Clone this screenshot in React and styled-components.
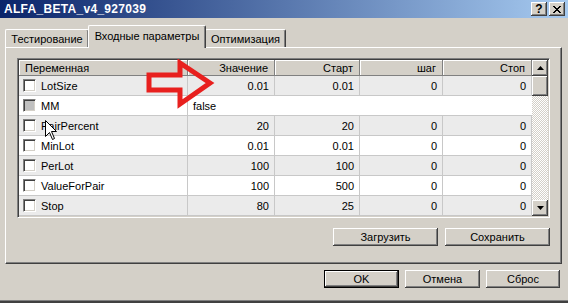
import React from "react";
import styled, { createGlobalStyle } from "styled-components";

const GlobalStyle = createGlobalStyle`
  html, body {
    margin: 0;
    padding: 0;
    background: #d4d0c8;
  }
  body {
    width: 568px;
    height: 303px;
    overflow: hidden;
    font-family: "Liberation Sans", Arial, sans-serif;
    font-size: 11px;
    color: #000;
  }
  * {
    box-sizing: border-box;
  }
`;

const params = [
  { name: "LotSize", values: ["0.01", "0.01", "0", "0"] },
  { name: "MM", text: "false", disabled: true },
  { name: "PairPercent", values: ["20", "20", "0", "0"] },
  { name: "MinLot", values: ["0.01", "0.01", "0", "0"] },
  { name: "PerLot", values: ["100", "100", "0", "0"] },
  { name: "ValueForPair", values: ["100", "500", "0", "0"] },
  { name: "Stop", values: ["80", "25", "0", "0"] },
];

const raised = `
  box-shadow: inset -1px -1px #404040, inset 1px 1px #ffffff,
    inset -2px -2px #808080, inset 2px 2px #d4d0c8;
`;

const App = () => {
  return (
    <Window>
      <GlobalStyle />
      <TitleBar>
        <Title>ALFA_BETA_v4_927039</Title>
        <TitleButtons>
          <TitleButton>?</TitleButton>
          <TitleButton>
            <svg width="8" height="7" viewBox="0 0 8 7">
              <path d="M0 0 L7 7 M1 0 L8 7 M7 0 L0 7 M8 0 L1 7" stroke="#000" strokeWidth="1" />
            </svg>
          </TitleButton>
        </TitleButtons>
      </TitleBar>

      <Body>
        <TabStrip>
          <Tab width={84}>Тестирование</Tab>
          <Tab width={118} active>
            Входные параметры
          </Tab>
          <Tab width={81}>Оптимизация</Tab>
        </TabStrip>

        <Panel>
          <Grid>
            <Table>
              <HeaderRow>
                <HeadCell align="left">Переменная</HeadCell>
                <HeadCell>Значение</HeadCell>
                <HeadCell>Старт</HeadCell>
                <HeadCell>шаг</HeadCell>
                <HeadCell>Стоп</HeadCell>
              </HeaderRow>
              {params.map((p, i) => (
                <Row key={p.name} shaded={i % 2 === 0 && !p.text}>
                  <NameCell>
                    <Check disabled={p.disabled} />
                    {p.name}
                  </NameCell>
                  {p.text ? (
                    <SpanCell>{p.text}</SpanCell>
                  ) : (
                    p.values.map((v, j) => <Cell key={j}>{v}</Cell>)
                  )}
                </Row>
              ))}
            </Table>
            <ScrollBar>
              <ScrollButton>
                <svg width="7" height="4" viewBox="0 0 7 4">
                  <path d="M3.5 0 L7 4 L0 4 Z" fill="#000" />
                </svg>
              </ScrollButton>
              <Thumb />
              <Track />
              <ScrollButton>
                <svg width="7" height="4" viewBox="0 0 7 4">
                  <path d="M0 0 L7 0 L3.5 4 Z" fill="#000" />
                </svg>
              </ScrollButton>
            </ScrollBar>
          </Grid>

          <ButtonRow>
            <Button width={105}>Загрузить</Button>
            <Button width={105}>Сохранить</Button>
          </ButtonRow>
        </Panel>

        <DialogButtons>
          <Button width={75} primary>
            OK
          </Button>
          <Button width={75}>Отмена</Button>
          <Button width={74}>Сброс</Button>
        </DialogButtons>
      </Body>

      <Arrow width="74" height="52" viewBox="0 0 74 52">
        <polygon
          points="4,16 35,16 35,4 65,24 35,45 35,31 4,31"
          fill="none"
          stroke="#e8201e"
          strokeWidth="5"
        />
      </Arrow>
      <Cursor width="13" height="21" viewBox="0 0 13 21">
        <path
          d="M0.5 0.5 L0.5 16.5 L4.5 12.5 L7.5 19.5 L9.5 18.5 L6.5 11.5 L11.5 11.5 Z"
          fill="#fff"
          stroke="#000"
          strokeWidth="1"
        />
      </Cursor>
    </Window>
  );
};

const Window = styled.div`
  position: relative;
  width: 568px;
  height: 303px;
  background: #d4d0c8;
  box-shadow: inset 0 -2px #404040, inset 0 -3px #808080;
`;

const TitleBar = styled.div`
  height: 18px;
  display: flex;
  align-items: center;
  padding: 0 3px 0 4px;
  background: linear-gradient(90deg, #0a246a, #a6caf0);
`;

const Title = styled.div`
  color: #fff;
  font-weight: bold;
  font-size: 12px;
  letter-spacing: 0.3px;
`;

const TitleButtons = styled.div`
  margin-left: auto;
  display: flex;
  gap: 2px;
`;

const TitleButton = styled.div`
  width: 16px;
  height: 14px;
  display: flex;
  align-items: center;
  justify-content: center;
  background: #d4d0c8;
  font-weight: bold;
  font-size: 12px;
  ${raised}
`;

const Body = styled.div`
  padding: 7px 6px 0 5px;
`;

const TabStrip = styled.div`
  display: flex;
  align-items: flex-end;
  height: 22px;
`;

const Tab = styled.div`
  position: relative;
  width: ${(p) => p.width}px;
  height: ${(p) => (p.active ? 23 : 18)}px;
  margin-bottom: ${(p) => (p.active ? -1 : 0)}px;
  margin-left: ${(p) => (p.active ? -1 : 0)}px;
  margin-right: ${(p) => (p.active ? -1 : 0)}px;
  z-index: ${(p) => (p.active ? 2 : 1)};
  display: flex;
  align-items: center;
  justify-content: center;
  padding-bottom: ${(p) => (p.active ? 3 : 0)}px;
  background: #d4d0c8;
  border-top: 1px solid #fff;
  border-left: 1px solid #fff;
  border-right: 1px solid #404040;
  border-radius: 2px 2px 0 0;
  box-shadow: inset -1px 0 #808080;
  white-space: nowrap;
`;

const Panel = styled.div`
  position: relative;
  z-index: 1;
  height: 217px;
  padding: 10px 11px 0 11px;
  background: #d4d0c8;
  border-top: 1px solid #fff;
  border-left: 1px solid #fff;
  border-right: 1px solid #404040;
  border-bottom: 1px solid #404040;
  box-shadow: inset -1px -1px #808080;
  display: flex;
  flex-direction: column;
`;

const Grid = styled.div`
  height: 160px;
  display: flex;
  border: 1px solid;
  border-color: #808080 #fff #fff #808080;
  box-shadow: inset 1px 1px #404040, inset -1px -1px #d4d0c8;
  padding: 1px;
  background: #fff;
`;

const Table = styled.div`
  flex: 1;
  display: flex;
  flex-direction: column;
`;

const columns = "169px 87px 85px 83px 1fr";

const HeaderRow = styled.div`
  display: grid;
  grid-template-columns: ${columns};
  height: 16px;
  background: #d4d0c8;
`;

const HeadCell = styled.div`
  display: flex;
  align-items: center;
  justify-content: ${(p) => (p.align === "left" ? "flex-start" : "flex-end")};
  padding: 0 6px;
  border-right: 1px solid #808080;
  border-bottom: 1px solid #808080;
  box-shadow: inset 1px 1px #fff;
  white-space: nowrap;
`;

const Row = styled.div`
  display: grid;
  grid-template-columns: ${columns};
  height: 20px;
  background: ${(p) => (p.shaded ? "#ebebeb" : "#fff")};
`;

const Cell = styled.div`
  display: flex;
  align-items: center;
  justify-content: flex-end;
  padding-right: 5px;
  border-right: 1px solid #c8c8c8;
  border-bottom: 1px solid #c8c8c8;
`;

const NameCell = styled(Cell)`
  justify-content: flex-start;
  padding: 0 0 0 4px;
  gap: 5px;
`;

const SpanCell = styled.div`
  grid-column: 2 / span 4;
  display: flex;
  align-items: center;
  padding-left: 5px;
  border-bottom: 1px solid #c8c8c8;
`;

const Check = styled.div`
  width: 13px;
  height: 13px;
  background: ${(p) => (p.disabled ? "#c0c0c0" : "#fff")};
  border: 1px solid;
  border-color: #808080 #fff #fff #808080;
  box-shadow: inset 1px 1px #404040, inset -1px -1px #d4d0c8;
`;

const ScrollBar = styled.div`
  width: 16px;
  display: flex;
  flex-direction: column;
`;

const ScrollButton = styled.div`
  height: 16px;
  display: flex;
  align-items: center;
  justify-content: center;
  background: #d4d0c8;
  ${raised}
`;

const Thumb = styled.div`
  height: 20px;
  background: #d4d0c8;
  ${raised}
`;

const Track = styled.div`
  flex: 1;
  background: repeating-conic-gradient(#d4d0c8 0 25%, #fff 0 50%) 0 0 / 2px 2px;
`;

const ButtonRow = styled.div`
  display: flex;
  justify-content: flex-end;
  gap: 7px;
  margin-top: 10px;
`;

const Button = styled.div`
  width: ${(p) => p.width}px;
  height: 18px;
  display: flex;
  align-items: center;
  justify-content: center;
  background: #d4d0c8;
  ${raised}
  ${(p) =>
    p.primary &&
    `
    box-shadow: inset 0 0 0 1px #000, inset -2px -2px #404040,
      inset 2px 2px #fff, inset -3px -3px #808080;
  `}
`;

const DialogButtons = styled.div`
  display: flex;
  justify-content: flex-end;
  gap: 6px;
  margin-top: 6px;
  padding-right: 2px;
`;

const Arrow = styled.svg`
  position: absolute;
  z-index: 5;
  left: 145px;
  top: 59px;
`;

const Cursor = styled.svg`
  position: absolute;
  z-index: 5;
  left: 45px;
  top: 120px;
`;

export default App;
